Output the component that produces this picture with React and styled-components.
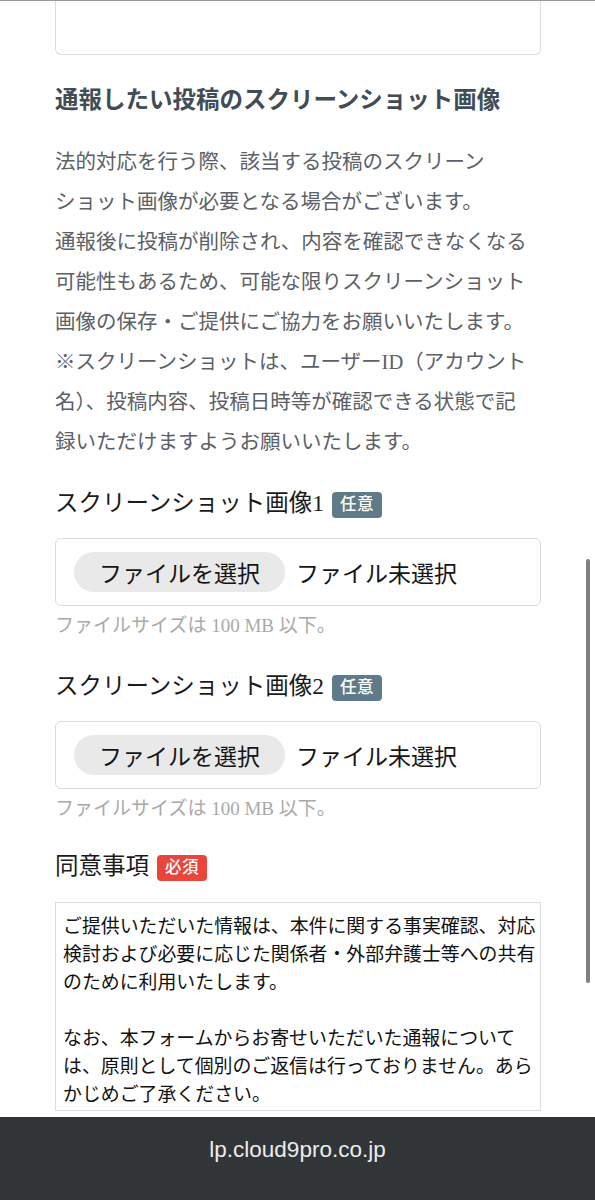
import React from "react";
import styled, { createGlobalStyle } from "styled-components";

const GlobalStyle = createGlobalStyle`
  html, body { margin: 0; padding: 0; background: #fff; }
  body { font-family: "Liberation Serif", "Noto Sans CJK JP", serif; }
  * { box-sizing: border-box; }
`;

const Page = styled.div`
  position: relative;
  width: 595px;
  height: 1200px;
  display: flex;
  flex-direction: column;
  overflow: hidden;
  background: #fff;
  border-top: 1px solid #9a9a9a;
`;

const Main = styled.main`
  flex: 1;
  overflow: hidden;
  padding: 0 54px 0 55px;
  display: flex;
  flex-direction: column;
`;

const ClippedField = styled.div`
  height: 54px;
  border: 1.5px solid #dcdcdc;
  border-top: none;
  border-radius: 0 0 6px 6px;
  background: #fff;
`;

const SectionTitle = styled.h2`
  margin: 29px 0 0;
  font-size: 23.5px;
  line-height: 32px;
  font-weight: 700;
  color: #404d56;
  white-space: nowrap;
`;

const Lead = styled.p`
  margin: 26px 0 0;
  font-size: 20.5px;
  line-height: 40px;
  color: #5b6166;
  white-space: pre-line;
`;

const FieldGroup = styled.div`
  display: flex;
  flex-direction: column;
  margin-top: ${(p) => p.$top}px;
`;

const LabelRow = styled.div`
  display: flex;
  align-items: center;
  gap: 8px;
  height: 32px;
`;

const LabelText = styled.span`
  font-size: 23.5px;
  line-height: 32px;
  color: #1b1b1b;
  white-space: nowrap;
`;

const Badge = styled.span`
  display: inline-flex;
  align-items: center;
  height: 26px;
  margin-top: 4px;
  padding: 0 8px;
  border-radius: 4px;
  background: ${(p) => (p.$required ? "#e8453c" : "#5f7b8a")};
  color: #fff;
  font-size: 16.5px;
  font-weight: 500;
  line-height: 1;
  letter-spacing: 0.5px;
`;

const FileBox = styled.div`
  margin-top: ${(p) => p.$top}px;
  height: 68px;
  display: flex;
  align-items: center;
  padding: 0 18px;
  border: 1.5px solid #dadada;
  border-radius: 6px;
  background: #fff;
`;

const ChooseButton = styled.span`
  display: inline-flex;
  align-items: center;
  height: 40px;
  padding: 0 25px;
  border-radius: 20px;
  background: #e9e9e9;
  color: #151515;
  font-size: 23px;
  white-space: nowrap;
`;

const FileStatus = styled.span`
  margin-left: 11px;
  font-size: 23px;
  color: #151515;
  white-space: nowrap;
`;

const Hint = styled.p`
  margin: 7px 0 0;
  font-size: 19px;
  line-height: 26px;
  color: #a9a9a9;
  white-space: nowrap;
`;

const AgreementBox = styled.div`
  margin-top: 20px;
  height: 209px;
  overflow: hidden;
  border: 1.5px solid #dcdcdc;
  padding: 10px 4px 0 7px;
  font-size: 18.9px;
  line-height: 28px;
  color: #111;
  white-space: pre;
`;

const Footer = styled.footer`
  flex: 0 0 83px;
  background: #323537;
  display: flex;
  justify-content: center;
  padding-top: 19px;
  margin-top: 5px;
`;

const Url = styled.span`
  font-family: "Liberation Sans", Arial, sans-serif;
  font-size: 22.5px;
  line-height: 28px;
  color: #ececec;
`;

const ScrollIndicator = styled.div`
  position: absolute;
  left: 586px;
  top: 558px;
  width: 4px;
  height: 424px;
  border-radius: 2px;
  background: #808080;
`;

const leadText = `法的対応を行う際、該当する投稿のスクリーン
ショット画像が必要となる場合がございます。
通報後に投稿が削除され、内容を確認できなくなる
可能性もあるため、可能な限りスクリーンショット
画像の保存・ご提供にご協力をお願いいたします。
※スクリーンショットは、ユーザーID（アカウント
名）、投稿内容、投稿日時等が確認できる状態で記
録いただけますようお願いいたします。`;

const agreementText = `ご提供いただいた情報は、本件に関する事実確認、対応
検討および必要に応じた関係者・外部弁護士等への共有
のために利用いたします。

なお、本フォームからお寄せいただいた通報について
は、原則として個別のご返信は行っておりません。あら
かじめご了承ください。
`;

function FileField({ label, top }) {
  return (
    <FieldGroup $top={top}>
      <LabelRow>
        <LabelText>{label}</LabelText>
        <Badge>任意</Badge>
      </LabelRow>
      <FileBox $top={19}>
        <ChooseButton>ファイルを選択</ChooseButton>
        <FileStatus>ファイル未選択</FileStatus>
      </FileBox>
      <Hint>ファイルサイズは 100 MB 以下。</Hint>
    </FieldGroup>
  );
}

export default function App() {
  return (
    <>
      <GlobalStyle />
      <Page>
        <Main>
          <ClippedField />
          <SectionTitle>通報したい投稿のスクリーンショット画像</SectionTitle>
          <Lead>{leadText}</Lead>
          <FileField label="スクリーンショット画像1" top={25} />
          <FileField label="スクリーンショット画像2" top={31} />
          <FieldGroup $top={28}>
            <LabelRow>
              <LabelText>同意事項</LabelText>
              <Badge $required>必須</Badge>
            </LabelRow>
            <AgreementBox>{agreementText}</AgreementBox>
          </FieldGroup>
        </Main>
        <Footer>
          <Url>lp.cloud9pro.co.jp</Url>
        </Footer>
        <ScrollIndicator />
      </Page>
    </>
  );
}
